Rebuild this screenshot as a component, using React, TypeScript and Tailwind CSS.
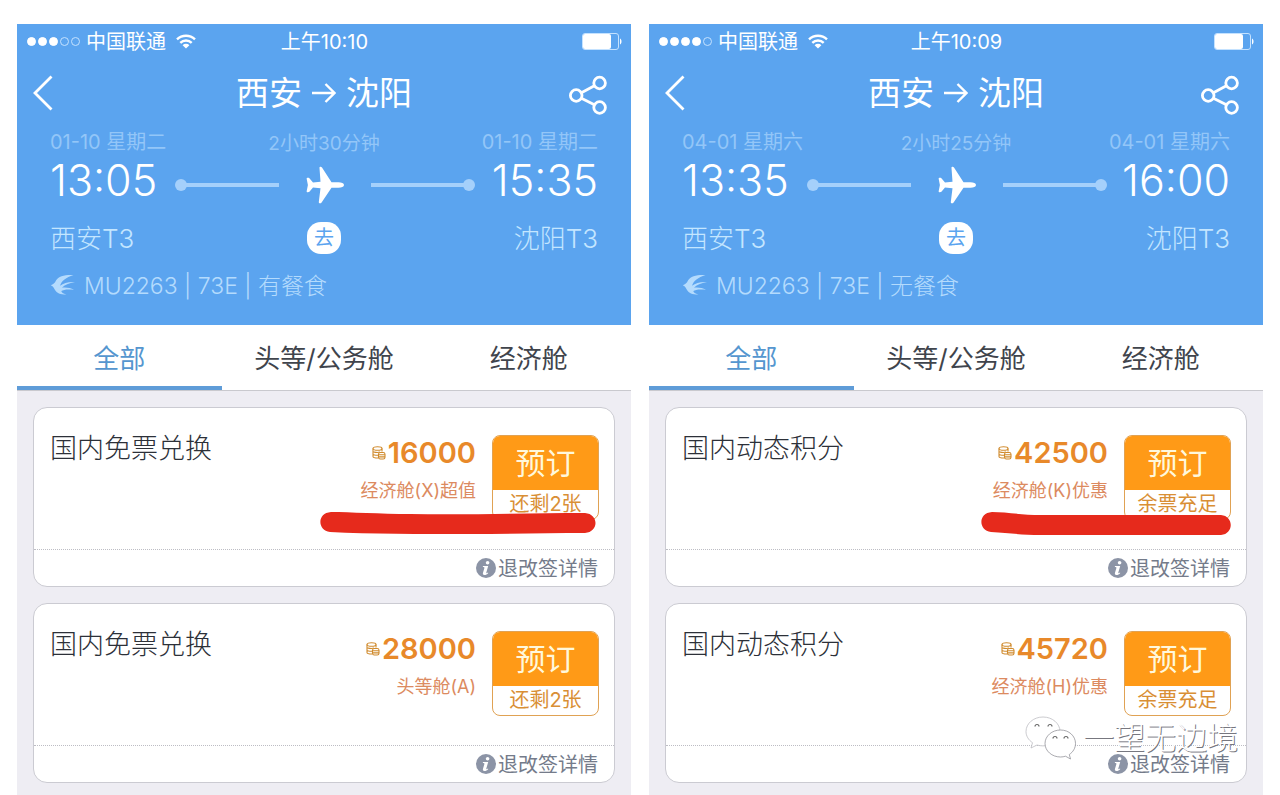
import React from "react";

interface Fare {
  name: string;
  points: string;
  cabin: string;
  stock: string;
}

interface Flight {
  id: string;
  signal: number;
  clock: string;
  date: string;
  duration: string;
  depart: string;
  arrive: string;
  meal: string;
  mark: { path: string; className: string };
  fares: Fare[];
  watermark?: string;
}

const flights: Flight[] = [
  {
    id: "jan",
    signal: 3,
    clock: "上午10:10",
    date: "01-10 星期二",
    duration: "2小时30分钟",
    depart: "13:05",
    arrive: "15:35",
    meal: "有餐食",
    mark: {
      path: "M11 0C30 0 60 2 90 2C150 3 210 1 265 1C279 2 279 20 265 21C230 21 190 22 150 22C100 22 50 22 10 20C-3 18 -3 1 11 0Z",
      className: "absolute right-[18px] top-[104px] h-6 w-[276px]",
    },
    fares: [
      { name: "国内免票兑换", points: "16000", cabin: "经济舱(X)超值", stock: "还剩2张" },
      { name: "国内免票兑换", points: "28000", cabin: "头等舱(A)", stock: "还剩2张" },
    ],
  },
  {
    id: "apr",
    signal: 4,
    clock: "上午10:09",
    date: "04-01 星期六",
    duration: "2小时25分钟",
    depart: "13:35",
    arrive: "16:00",
    meal: "无餐食",
    mark: {
      path: "M11 0C25 0 40 3 60 3H240C253 4 253 22 240 23H60C40 23 28 21 10 20C-3 18 -3 1 11 0Z",
      className: "absolute right-[14px] top-[104px] h-6 w-[251px]",
    },
    fares: [
      { name: "国内动态积分", points: "42500", cabin: "经济舱(K)优惠", stock: "余票充足" },
      { name: "国内动态积分", points: "45720", cabin: "经济舱(H)优惠", stock: "余票充足" },
    ],
    watermark: "一望无边境",
  },
];

const tabs = ["全部", "头等/公务舱", "经济舱"];

const WifiIcon = () => (
  <svg viewBox="0 0 20 15" className="h-[15px] w-5" fill="none" stroke="currentColor" strokeWidth="2.4">
    <path d="M1 5.3a13 13 0 0 1 18 0" />
    <path d="M4.3 8.8a8.2 8.2 0 0 1 11.4 0" />
    <path d="M10 14.6 6.6 11.2a4.8 4.8 0 0 1 6.8 0Z" fill="currentColor" stroke="none" />
  </svg>
);

const BatteryIcon = () => (
  <svg viewBox="0 0 40 17" className="h-[17px] w-10" fill="none">
    <rect x="0.5" y="0.5" width="36" height="16" rx="2.5" stroke="#c4e2ff" />
    <rect x="1" y="1" width="28" height="15" rx="2" fill="#fff" />
    <path d="M38 5.5c2 1 2 5 0 6Z" fill="#fff" />
  </svg>
);

const ShareIcon = () => (
  <svg viewBox="0 0 38 40" className="h-10 w-[38px]" fill="none" stroke="currentColor" strokeWidth="2.8">
    <circle cx="7.2" cy="20.5" r="5.8" />
    <circle cx="30.6" cy="8" r="5.8" />
    <circle cx="30.6" cy="32.5" r="5.8" />
    <path d="M12.4 17.7 25.4 10.8M12.4 23.3 25.4 29.8" />
  </svg>
);

const PlaneIcon = () => (
  <svg viewBox="0 0 40 38" className="mx-[26px] h-[38px] w-10 shrink-0" fill="#fff">
    <path d="M39 19c0-1.700-2.500-2.700-5.500-2.700h-7L17 1.600c-.9-1.300-2.800-1-2.500.5l1 13.700-7.500.7-3.600-4.200c-1-.8-3.200-.6-2.700.8L2.900 19l-1.200 5.900c-.5 1.400 1.700 1.600 2.700.8L8 21.500l7.500.7-1.700 13.900c-.2 1.500 1.900 1.600 2.800.3l9.900-14.700h7c3 0 5.500-1 5.500-2.700Z" />
  </svg>
);

const SwallowIcon = () => (
  <svg viewBox="0 0 26 22" className="h-[22px] w-[26px]" fill="currentColor">
    <path d="M23.500 1C15 .6 8.500 2 6 6.500 5 9 3 10.500 .8 11.200 3.500 12.500 4 14 5 16c1.800 3.200 5.500 4.600 11.500 4.500-3.500-.9-5-2-5.200-3.400 2-1.600 6.500-2 12.700-1.300-3.500-1.800-8-2.600-12-2 2.500-3 7-4.800 13-5.800-6.500-.4-11.500 1-15 3.700C11.500 7 16 3.300 23.500 1Z" />
  </svg>
);

const CoinsIcon = () => (
  <svg viewBox="0 0 14 14" className="h-[14px] w-[14px]" fill="none" stroke="#d08a2c" strokeWidth="1.1">
    <ellipse cx="5.500" cy="2.500" rx="4.500" ry="1.800" />
    <path d="M1 2.500v8c0 1 2 1.500 5 1.500M10 2.500v3M1 5.200c0 1.200 5 1.600 7 .8M1 8c0 1 2.500 1.400 5 1.300" />
    <rect x="6.500" y="6.500" width="6.500" height="6.500" rx="1.800" />
    <path d="M6.500 8.700h6.500M6.500 10.900h6.500" />
  </svg>
);

const InfoIcon = () => (
  <svg viewBox="0 0 20 20" className="h-5 w-5">
    <circle cx="10" cy="10" r="10" fill="#8c94a6" />
    <circle cx="11.6" cy="4.8" r="1.8" fill="#fff" />
    <path d="M7 8h5.200l-1.900 6.500c-.2.900.5.800 1.600-.1l.4.500c-1.300 1.600-2.700 2.200-3.900 2.100-1.400-.1-1.800-1.100-1.400-2.200l1.400-4.800c.1-.6-.3-.9-1.600-.9Z" fill="#fff" />
  </svg>
);

const WeChatIcon = () => (
  <svg viewBox="0 0 52 44" className="h-11 w-[52px]" fill="#fff" stroke="#b4b4ba" strokeWidth="0.7">
    <path d="M18 1C8.500 1 1 7.500 1 15.500c0 4.500 2.500 8.500 6.500 11.200L6 32l6-3c2 .6 4 .9 6 .9 9.500 0 17-6.500 17-14.400S27.500 1 18 1Z" />
    <path
      d="M35.500 14C27 14 20 20 20 27.500S27 41 35.500 41c1.800 0 3.500-.3 5-.8l5 2.800-1.200-4.500c3.800-2.500 6.200-6.500 6.200-11C50.500 20 44 14 35.500 14Z"
      stroke="#85858c"
    />
    <path
      d="M10 10.500a2 2 0 0 1 4 0M23 10.500a2 2 0 0 1 4 0M28 22.500a2 2 0 0 1 4 0M39 22.500a2 2 0 0 1 4 0"
      fill="none"
      stroke="#666"
      strokeWidth="1.2"
    />
  </svg>
);

const StatusBar = ({ signal, clock }: { signal: number; clock: string }) => (
  <div className="grid h-[34px] grid-cols-3 items-center pl-[10px] pr-[9px] text-xl">
    <div className="flex items-center">
      <div className="mr-1.5 flex gap-0.5">
        {Array.from({ length: 5 }).map((_, i) => (
          <span
            key={i}
            className={`h-[9px] w-[9px] rounded-full border ${
              i < signal ? "border-white bg-white" : "border-[#c4e2ff]"
            }`}
          />
        ))}
      </div>
      <span className="mr-2.5 whitespace-nowrap pt-0.5 leading-7">中国联通</span>
      <WifiIcon />
    </div>
    <span className="whitespace-nowrap pt-0.5 text-center leading-7">{clock}</span>
    <div className="flex justify-end">
      <BatteryIcon />
    </div>
  </div>
);

const FlightHeader = ({ flight }: { flight: Flight }) => (
  <header className="bg-[#5ba4ef] pb-[17px] text-white">
    <StatusBar signal={flight.signal} clock={flight.clock} />
    <div className="grid h-[70px] grid-cols-3 items-center px-4">
      <button type="button" aria-label="返回">
        <svg viewBox="0 0 20 36" className="h-9 w-5" fill="none" stroke="currentColor" strokeWidth="2.8">
          <path d="M18.5 1.500 2 18l16.500 16.500" />
        </svg>
      </button>
      <h1 className="flex items-center justify-center gap-2.5 whitespace-nowrap text-[33px] font-normal leading-10">
        西安
        <svg viewBox="0 0 24 20" className="h-5 w-6" fill="none" stroke="currentColor" strokeWidth="2.4">
          <path d="M0 10h22M13.500 1l9 9-9 9" />
        </svg>
        沈阳
      </h1>
      <button type="button" aria-label="分享" className="justify-self-end pr-2 pt-1">
        <ShareIcon />
      </button>
    </div>

    <div className="px-[33px] font-normal">
      <div className="grid h-7 grid-cols-3 whitespace-nowrap text-xl leading-7 text-[#93c6f8]">
        <span>{flight.date}</span>
        <span className="pt-0.5 text-center text-[19px]">{flight.duration}</span>
        <span className="text-right">{flight.date}</span>
      </div>
      <div className="flex h-[58px] items-center">
        <time className="w-[108px] pb-2.5 text-[43px] font-light leading-[46px]">{flight.depart}</time>
        <div className="ml-[17px] flex flex-1 items-center text-[#a5d0fb]">
          <span className="h-3 w-3 rounded-full bg-current" />
          <span className="-ml-1 h-1 flex-1 bg-current" />
        </div>
        <PlaneIcon />
        <div className="mr-[15px] flex flex-1 items-center text-[#a5d0fb]">
          <span className="-mr-1 h-1 flex-1 bg-current" />
          <span className="h-3 w-3 rounded-full bg-current" />
        </div>
        <time className="flex w-[108px] justify-end pb-2.5 text-[43px] font-light leading-[46px]">{flight.arrive}</time>
      </div>
      <div className="grid h-12 grid-cols-3 items-center text-[26px] font-light leading-8 text-[#c4e6ff]">
        <span className="pt-0.5">西安T3</span>
        <span className="flex h-8 w-[34px] items-center justify-center justify-self-center rounded-[14px] bg-white text-xl font-normal text-[#5ba4ef]">
          去
        </span>
        <span className="pt-0.5 text-right">沈阳T3</span>
      </div>
      <div className="flex h-[46px] items-center gap-2 text-[23px] font-light leading-8 text-[#b4dbfd]">
        <SwallowIcon />
        <span className="pt-0.5">MU2263 | 73E | {flight.meal}</span>
      </div>
    </div>
  </header>
);

const FareCard = ({ fare, children }: { fare: Fare; children?: React.ReactNode }) => (
  <li className="relative rounded-[14px] border border-[#cbcbd2] bg-white">
    <div className="flex h-[142px] items-start border-b border-dotted border-[#bdbdc4] pl-4 pr-[15px] pt-[27px]">
      <h2 className="flex-1 whitespace-nowrap text-[27px] font-light leading-7 text-[#2c3038]">{fare.name}</h2>
      <div className="mr-4 flex flex-col items-end whitespace-nowrap">
        <div className="flex items-center gap-0.5 text-[29px] font-semibold leading-9 text-[#e8892a]">
          <CoinsIcon />
          {fare.points}
        </div>
        <span className="text-lg leading-10 text-[#dc8a60]">{fare.cabin}</span>
      </div>
      <button
        type="button"
        className="flex w-[107px] flex-col overflow-hidden rounded-lg border border-[#e0a254] bg-white text-center"
      >
        <span className="w-full bg-[#ff9a17] text-[30px] leading-[54px] text-[#fff8dc]">预订</span>
        <span className="w-full whitespace-nowrap text-xl leading-[29px] text-[#d98f35]">{fare.stock}</span>
      </button>
    </div>
    <div className="flex h-9 items-center justify-end pr-4">
      <a href="#rules" className="flex items-center gap-0.5 text-xl leading-7 text-[#747b8a]">
        <InfoIcon />
        <span className="pt-0.5">退改签详情</span>
      </a>
    </div>
    {children}
  </li>
);

const FlightPanel = ({ flight }: { flight: Flight }) => (
  <section className="flex min-w-0 flex-1 flex-col bg-[#eeedf3]">
    <FlightHeader flight={flight} />
    <nav className="grid h-[66px] grid-cols-3 border-b border-[#c9c9ce] bg-white text-[26px]">
      {tabs.map((tab, i) => (
        <button
          key={tab}
          type="button"
          className={`whitespace-nowrap border-b-4 pt-1.5 leading-8 ${
            i === 0 ? "border-[#5f9cd8] text-[#5596cf]" : "border-transparent text-[#40444c]"
          }`}
        >
          {tab}
        </button>
      ))}
    </nav>
    <ul className="flex flex-col gap-4 px-4 pb-[11px] pt-4">
      {flight.fares.map((fare, i) => (
        <FareCard key={fare.points} fare={fare}>
          {i === 0 && (
            <svg className={flight.mark.className} fill="#e62a1c">
              <path d={flight.mark.path} />
            </svg>
          )}
          {i === 1 && flight.watermark && (
            <div className="absolute right-2 top-[112px] flex items-center gap-1.5">
              <WeChatIcon />
              <span className="whitespace-nowrap text-[31px] font-light leading-10 text-white [text-shadow:1px_1px_0_#77777f]">
                {flight.watermark}
              </span>
            </div>
          )}
        </FareCard>
      ))}
    </ul>
  </section>
);

const App = () => (
  <main className="flex min-h-screen gap-[18px] bg-white px-[17px] pt-6 font-['Inter','Noto_Sans_CJK_SC',sans-serif]">
    {flights.map((flight) => (
      <FlightPanel key={flight.id} flight={flight} />
    ))}
  </main>
);

export default App;
